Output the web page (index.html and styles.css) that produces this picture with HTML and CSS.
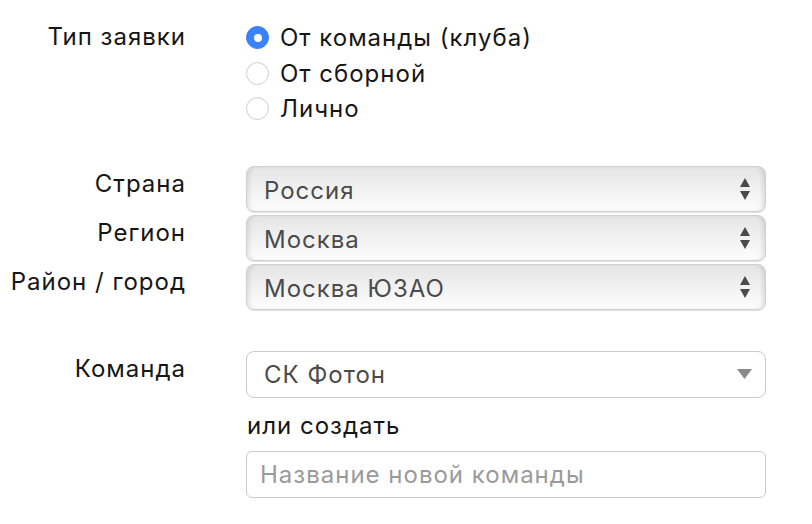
FILE: index.html
```html
<!DOCTYPE html>
<html lang="ru">
<head>
<meta charset="utf-8">
<link rel="stylesheet" href="styles.css">
</head>
<body>
<form class="form">
  <div class="row row-type">
    <div class="label">Тип заявки</div>
    <div class="control radios">
      <label class="radio"><span class="dot checked"></span><span>От команды (клуба)</span></label>
      <label class="radio"><span class="dot"></span><span>От сборной</span></label>
      <label class="radio"><span class="dot"></span><span>Лично</span></label>
    </div>
  </div>

  <div class="geo">
    <div class="row">
      <div class="label label-sel">Страна</div>
      <div class="control">
        <div class="select aqua"><span class="val">Россия</span>
          <svg class="updown" width="10" height="22" viewBox="0 0 10 22"><path d="M5 0 L10 9 L0 9 Z M0 13 L10 13 L5 22 Z" fill="#4a4a4a"/></svg>
        </div>
      </div>
    </div>
    <div class="row">
      <div class="label label-sel">Регион</div>
      <div class="control">
        <div class="select aqua"><span class="val">Москва</span>
          <svg class="updown" width="10" height="22" viewBox="0 0 10 22"><path d="M5 0 L10 9 L0 9 Z M0 13 L10 13 L5 22 Z" fill="#4a4a4a"/></svg>
        </div>
      </div>
    </div>
    <div class="row">
      <div class="label label-sel">Район / город</div>
      <div class="control">
        <div class="select aqua"><span class="val">Москва ЮЗАО</span>
          <svg class="updown" width="10" height="22" viewBox="0 0 10 22"><path d="M5 0 L10 9 L0 9 Z M0 13 L10 13 L5 22 Z" fill="#4a4a4a"/></svg>
        </div>
      </div>
    </div>
  </div>

  <div class="row row-team">
    <div class="label label-sel">Команда</div>
    <div class="control">
      <div class="select flat"><span class="val">СК Фотон</span>
        <svg class="down" width="15" height="10" viewBox="0 0 15 10"><path d="M0 0 L15 0 L7.5 10 Z" fill="#8a8a8a"/></svg>
      </div>
      <div class="or">или создать</div>
      <div class="input"><span class="placeholder">Название новой команды</span></div>
    </div>
  </div>
</form>
</body>
</html>
```

FILE: styles.css
```css
* { box-sizing: border-box; }
html, body { margin: 0; padding: 0; background: #fff; }
body {
  font-family: Inter, "Noto Sans", "Liberation Sans", sans-serif;
  font-size: 24px;
  letter-spacing: 1px;
  color: #161616;
}
.form { padding-top: 19px; }
.row { display: flex; align-items: flex-start; gap: 60px; }
.label { width: 186px; flex: none; text-align: right; line-height: 35px; }
.control { width: 520px; flex: none; }

.radios { display: flex; flex-direction: column; padding-top: 1px; }
.radio { display: flex; align-items: center; height: 35.5px; gap: 11px; }
.dot {
  width: 23px; height: 23px; border-radius: 50%;
  border: 1px solid #cfcfcf; background: #fff;
  box-shadow: inset 0 1px 1px rgba(0,0,0,0.04);
  flex: none; display: flex; align-items: center; justify-content: center;
}
.dot.checked { background: #3a82f7; border-color: #3a82f7; }
.dot.checked::after { content: ""; width: 8px; height: 8px; border-radius: 50%; background: #fff; }

.geo { margin-top: 39px; display: flex; flex-direction: column; gap: 3px; }
.label-sel { padding-top: 0; }

.select {
  height: 46px; border-radius: 8px;
  display: flex; align-items: center; justify-content: space-between;
  padding: 0 14px 0 17px; color: #4b4b4b;
}
.aqua {
  border: 1px solid #d0d0d0;
  background: linear-gradient(#e4e4e4 0%, #ececec 30%, #f6f6f6 70%, #fdfdfd 100%);
  box-shadow: inset 5px 0 5px -3px rgba(0,0,0,0.10), inset -5px 0 5px -3px rgba(0,0,0,0.12), 0 1px 1px rgba(0,0,0,0.12);
  padding-right: 15px;
  padding-top: 3px;
}
.aqua .updown { margin-top: -3px; }
.row-team { margin-top: 41px; }
.flat { height: 47px; border: 1px solid #cbcbcb; background: #fff; padding-right: 13px; }
.or { margin-top: 11px; line-height: 34px; color: #161616; padding-left: 1px; }
.input {
  margin-top: 8px; height: 47px; border: 1px solid #cbcbcb; border-radius: 6px;
  display: flex; align-items: center; padding-left: 13px;
}
.placeholder { color: #9a9a9a; }
```
